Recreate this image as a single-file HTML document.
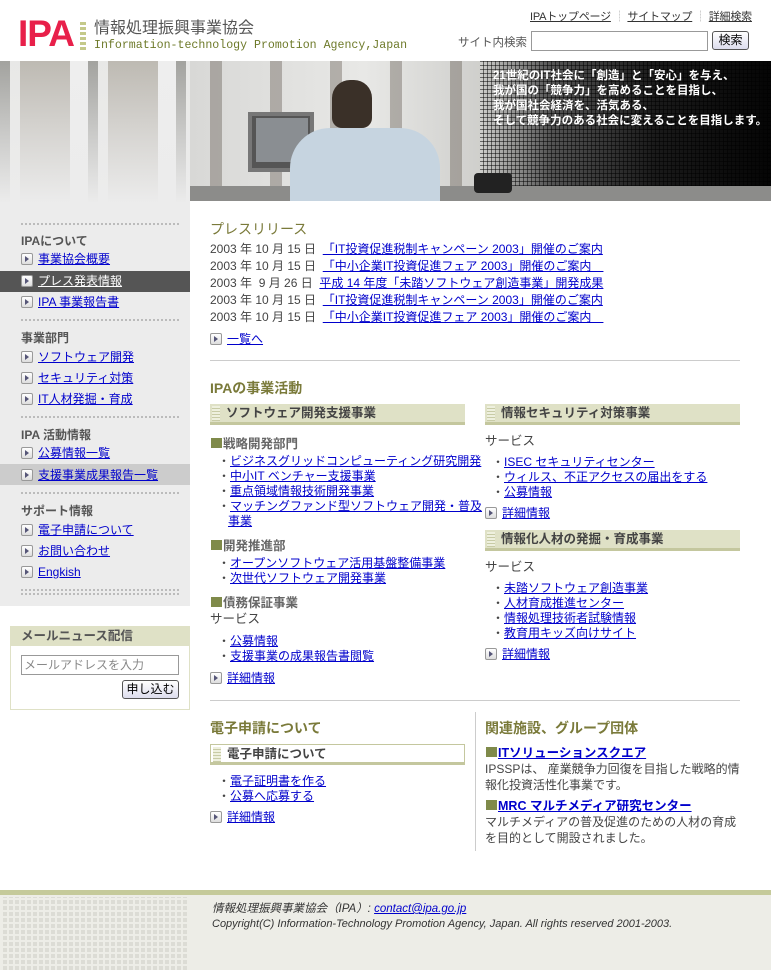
<!DOCTYPE html>
<html><head><meta charset="utf-8">
<style>
*{margin:0;padding:0;box-sizing:border-box}
body{width:771px;height:970px;position:relative;background:#fff;font-family:"Liberation Sans","Noto Sans CJK JP",sans-serif;font-size:12px;color:#444;overflow:hidden}
a{color:#00c;text-decoration:underline}
.abs{position:absolute}
.nav{position:absolute;left:21px;font-size:12px;line-height:14px;white-space:nowrap}
.ic{display:inline-block;width:12px;height:12px;border:1px solid #999;border-radius:2px;background:linear-gradient(#fff,#ddd);vertical-align:-2px;margin-right:5px;position:relative}
.ic:after{content:"";position:absolute;left:3px;top:2px;border-left:4px solid #557;border-top:3px solid transparent;border-bottom:3px solid transparent}
.sh{position:absolute;left:21px;font-weight:bold;color:#555;font-size:12px}
.dot{position:absolute;left:21px;width:158px;border-top:2px dotted #bbb}
.h2{position:absolute;color:#7a7a3a;font-size:14px;font-weight:bold;white-space:nowrap}
.bar{position:absolute;height:21px;background:#dfe1c6;border-bottom:3px solid #c4c79e;font-weight:bold;color:#444;font-size:12.5px;line-height:19px;padding-left:16px}
.bar:before{content:"";position:absolute;left:2px;top:2px;width:8px;height:15px;background:repeating-linear-gradient(#eef0de 0 2px,#c8cba6 2px 3px)}
.row{position:absolute;white-space:nowrap;line-height:15px}
.sub{position:absolute;font-weight:bold;color:#666;white-space:nowrap;font-size:12.5px}
.sub b{display:inline-block;width:11px;height:10px;background:#7f8a4a;margin-right:1px}
</style></head><body>

<!-- header -->
<div class="abs" style="left:18px;top:15px;font:bold 37px/1 'Liberation Sans',sans-serif;color:#e8204a;letter-spacing:-1px">IPA</div>
<div class="abs" style="left:80px;top:22px;width:6px;height:30px;background:repeating-linear-gradient(#c4c98a 0 3px,#fff 3px 5px)"></div>
<div class="abs" style="left:94px;top:20px;font-size:16px;line-height:18px;color:#555;white-space:nowrap">情報処理振興事業協会</div>
<div class="abs" style="left:94px;top:39px;font:11.6px/14px 'Liberation Mono',monospace;color:#6e7a2a;white-space:nowrap">Information-technology Promotion Agency,Japan</div>
<div class="abs" style="left:530px;top:8px;font-size:11px;white-space:nowrap;color:#999;letter-spacing:-.2px"><a style="color:#333">IPAトップページ</a> ┊ <a style="color:#333">サイトマップ</a> ┊ <a style="color:#333">詳細検索</a></div>
<div class="abs" style="left:440px;width:87px;text-align:right;top:34px;color:#555;font-size:11.5px">サイト内検索</div>
<div class="abs" style="left:531px;top:31px;width:177px;height:20px;border:1px solid #999"></div>
<div class="abs" style="left:712px;top:31px;width:37px;height:19px;border:1px solid #555;border-radius:3px;background:linear-gradient(#fff,#dde);font-size:12px;text-align:center;line-height:17px;color:#000">検索</div>

<!-- banner -->
<div class="abs" style="left:0;top:61px;width:190px;height:150px;background:repeating-linear-gradient(90deg,#9a9a96 0 10px,#e8e8e6 10px 20px,#b8b4ac 20px 70px,#eee 70px 88px)"></div>
<div class="abs" style="left:0;top:61px;width:190px;height:150px;background:linear-gradient(180deg,rgba(236,236,236,.1) 0,rgba(236,236,236,.6) 50%,#ececec 95%)"></div>
<div class="abs" style="left:190px;top:61px;width:581px;height:140px;background:linear-gradient(90deg,#d8d8d6 0,#e8e8e6 30%,#cfcfcc 50%,#555 62%,#1a1a1a 80%,#050505 100%)"></div>
<div class="abs" style="left:190px;top:61px;width:290px;height:140px;background:repeating-linear-gradient(90deg,transparent 0 20px,rgba(80,70,60,.35) 20px 32px,transparent 32px 60px)"></div>
<div class="abs" style="left:480px;top:61px;width:291px;height:140px;background:repeating-linear-gradient(90deg,transparent 0 3px,rgba(0,0,0,.5) 3px 4px),repeating-linear-gradient(0deg,transparent 0 3px,rgba(0,0,0,.5) 3px 4px)"></div>
<div class="abs" style="left:190px;top:186px;width:581px;height:15px;background:#8c8c8a"></div>
<div class="abs" style="left:248px;top:112px;width:66px;height:60px;background:#555;border:4px solid #777"></div>
<div class="abs" style="left:256px;top:118px;width:52px;height:44px;background:#8a8e92"></div>
<div class="abs" style="left:290px;top:128px;width:150px;height:73px;background:#c6d4e0;border-radius:40px 40px 0 0"></div>
<div class="abs" style="left:332px;top:80px;width:40px;height:48px;background:#3a3028;border-radius:18px 18px 10px 10px"></div>
<div class="abs" style="left:474px;top:173px;width:38px;height:20px;background:#222;border-radius:4px"></div>
<div class="abs" style="left:493px;top:69px;color:#fff;font-size:11.5px;font-weight:bold;line-height:15px;white-space:nowrap">21世紀のIT社会に「創造」と「安心」を与え、<br>我が国の「競争力」を高めることを目指し、<br>我が国社会経済を、活気ある、<br>そして競争力のある社会に変えることを目指します。</div>

<!-- sidebar -->
<div class="abs" style="left:0;top:211px;width:190px;height:395px;background:#ececec"></div>
<div class="dot" style="top:223px"></div>
<div class="sh" style="top:232px">IPAについて</div>
<div class="nav" style="top:252px"><span class="ic"></span><a>事業協会概要</a></div>
<div class="abs" style="left:0;top:271px;width:190px;height:21px;background:#555"></div>
<div class="nav" style="top:274px"><span class="ic"></span><a style="color:#fff">プレス発表情報</a></div>
<div class="nav" style="top:295px"><span class="ic"></span><a>IPA 事業報告書</a></div>
<div class="dot" style="top:319px"></div>
<div class="sh" style="top:329px">事業部門</div>
<div class="nav" style="top:350px"><span class="ic"></span><a>ソフトウェア開発</a></div>
<div class="nav" style="top:371px"><span class="ic"></span><a>セキュリティ対策</a></div>
<div class="nav" style="top:392px"><span class="ic"></span><a>IT人材発掘・育成</a></div>
<div class="dot" style="top:416px"></div>
<div class="sh" style="top:426px">IPA 活動情報</div>
<div class="nav" style="top:446px"><span class="ic"></span><a>公募情報一覧</a></div>
<div class="abs" style="left:0;top:464px;width:190px;height:21px;background:#ccc"></div>
<div class="nav" style="top:468px"><span class="ic"></span><a>支援事業成果報告一覧</a></div>
<div class="dot" style="top:492px"></div>
<div class="sh" style="top:502px">サポート情報</div>
<div class="nav" style="top:523px"><span class="ic"></span><a>電子申請について</a></div>
<div class="nav" style="top:544px"><span class="ic"></span><a>お問い合わせ</a></div>
<div class="nav" style="top:565px"><span class="ic"></span><a>Engkish</a></div>
<div class="dot" style="top:589px"></div><div class="dot" style="top:593px"></div>

<div class="abs" style="left:10px;top:626px;width:180px;height:84px;border:1px solid #dfe1c6"></div>
<div class="abs" style="left:10px;top:626px;width:180px;height:20px;background:#dfe1c6;font-weight:bold;color:#555;padding-left:11px;line-height:20px;font-size:12.5px">メールニュース配信</div>
<div class="abs" style="left:21px;top:655px;width:158px;height:20px;border:1px solid #999;color:#888;padding-left:2px;line-height:18px">メールアドレスを入力</div>
<div class="abs" style="left:122px;top:680px;width:57px;height:19px;border:1px solid #555;border-radius:3px;background:linear-gradient(#fff,#dde);text-align:center;line-height:17px;color:#000">申し込む</div>

<!-- press -->
<div class="h2" style="left:210px;top:219px;font-weight:normal;font-size:14px">プレスリリース</div>
<div class="row" style="left:210px;top:242px">2003 年 10 月 15 日 &nbsp;<a>「IT投資促進税制キャンペーン 2003」開催のご案内</a></div>
<div class="row" style="left:210px;top:259px">2003 年 10 月 15 日 &nbsp;<a>「中小企業IT投資促進フェア 2003」開催のご案内　</a></div>
<div class="row" style="left:210px;top:276px">2003 年 &nbsp;9 月 26 日 &nbsp;<a>平成 14 年度「未踏ソフトウェア創造事業」開発成果</a></div>
<div class="row" style="left:210px;top:293px">2003 年 10 月 15 日 &nbsp;<a>「IT投資促進税制キャンペーン 2003」開催のご案内</a></div>
<div class="row" style="left:210px;top:310px">2003 年 10 月 15 日 &nbsp;<a>「中小企業IT投資促進フェア 2003」開催のご案内　</a></div>
<div class="row" style="left:210px;top:332px"><span class="ic"></span><a>一覧へ</a></div>
<div class="abs" style="left:210px;top:360px;width:530px;border-top:1px solid #ccc"></div>

<!-- activities -->
<div class="h2" style="left:210px;top:378px">IPAの事業活動</div>
<div class="bar" style="left:210px;top:404px;width:255px">ソフトウェア開発支援事業</div>
<div class="bar" style="left:485px;top:404px;width:255px">情報セキュリティ対策事業</div>

<div class="sub" style="left:211px;top:433px"><b></b>戦略開発部門</div>
<div class="row" style="left:218px;top:454px;line-height:15px">・<a>ビジネスグリッドコンピューティング研究開発</a><br>・<a>中小IT ベンチャー支援事業</a><br>・<a>重点領域情報技術開発事業</a><br>・<a>マッチングファンド型ソフトウェア開発・普及</a><br>&nbsp;&nbsp;&nbsp;<a>事業</a></div>
<div class="sub" style="left:211px;top:535px"><b></b>開発推進部</div>
<div class="row" style="left:218px;top:556px">・<a>オープンソフトウェア活用基盤整備事業</a><br>・<a>次世代ソフトウェア開発事業</a></div>
<div class="sub" style="left:211px;top:592px"><b></b>債務保証事業</div>
<div class="row" style="left:210px;top:612px;font-size:12.5px">サービス</div>
<div class="row" style="left:218px;top:634px">・<a>公募情報</a><br>・<a>支援事業の成果報告書閲覧</a></div>
<div class="row" style="left:210px;top:671px"><span class="ic"></span><a>詳細情報</a></div>

<div class="row" style="left:485px;top:434px;font-size:12.5px">サービス</div>
<div class="row" style="left:492px;top:455px">・<a>ISEC セキュリティセンター</a><br>・<a>ウィルス、不正アクセスの届出をする</a><br>・<a>公募情報</a></div>
<div class="row" style="left:485px;top:506px"><span class="ic"></span><a>詳細情報</a></div>
<div class="bar" style="left:485px;top:530px;width:255px">情報化人材の発掘・育成事業</div>
<div class="row" style="left:485px;top:560px;font-size:12.5px">サービス</div>
<div class="row" style="left:492px;top:581px">・<a>未踏ソフトウェア創造事業</a><br>・<a>人材育成推進センター</a><br>・<a>情報処理技術者試験情報</a><br>・<a>教育用キッズ向けサイト</a></div>
<div class="row" style="left:485px;top:647px"><span class="ic"></span><a>詳細情報</a></div>

<div class="abs" style="left:210px;top:700px;width:530px;border-top:1px solid #ccc"></div>

<!-- lower -->
<div class="h2" style="left:210px;top:718px">電子申請について</div>
<div class="bar" style="left:210px;top:744px;width:255px;background:#fff;border:1px solid #c4c79e;border-bottom:3px solid #c4c79e">電子申請について</div>
<div class="row" style="left:218px;top:774px">・<a>電子証明書を作る</a><br>・<a>公募へ応募する</a></div>
<div class="row" style="left:210px;top:810px"><span class="ic"></span><a>詳細情報</a></div>
<div class="abs" style="left:475px;top:712px;height:139px;border-left:1px solid #ccc"></div>
<div class="h2" style="left:485px;top:718px">関連施設、グループ団体</div>
<div class="sub" style="left:486px;top:742px"><b></b><a>ITソリューションスクエア</a></div>
<div class="row" style="left:485px;top:761px;line-height:16px">IPSSPは、 産業競争力回復を目指した戦略的情<br>報化投資活性化事業です。</div>
<div class="sub" style="left:486px;top:795px"><b></b><a>MRC マルチメディア研究センター</a></div>
<div class="row" style="left:485px;top:814px;line-height:16px">マルチメディアの普及促進のための人材の育成<br>を目的として開設されました。</div>

<!-- footer -->
<div class="abs" style="left:0;top:890px;width:771px;height:5px;background:#c5ca9a"></div>
<div class="abs" style="left:0;top:895px;width:771px;height:75px;background:#edede7"></div>
<div class="abs" style="left:3px;top:897px;width:185px;height:73px;background:repeating-linear-gradient(90deg,transparent 0 4px,#edede7 4px 6px),repeating-linear-gradient(0deg,transparent 0 4px,#edede7 4px 6px),#dcdcd5"></div>
<div class="row" style="left:212px;top:902px;font-style:italic;font-size:11.5px;color:#333">情報処理振興事業協会（IPA）: <a>contact@ipa.go.jp</a></div>
<div class="row" style="left:212px;top:917px;font-style:italic;font-size:11px;color:#333">Copyright(C) Information-Technology Promotion Agency, Japan. All rights reserved 2001-2003.</div>
</body></html>
